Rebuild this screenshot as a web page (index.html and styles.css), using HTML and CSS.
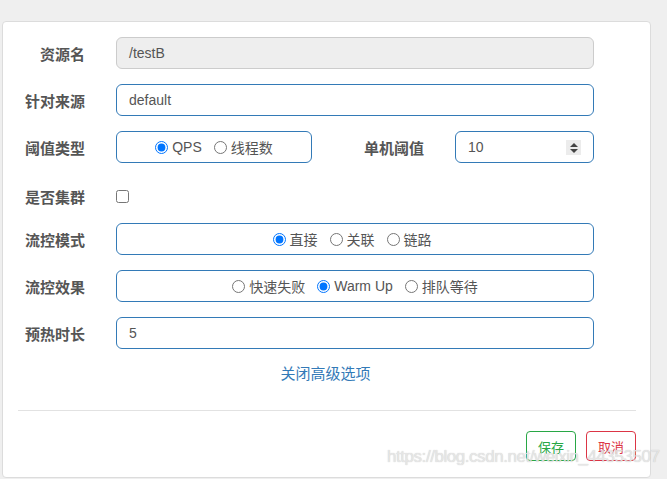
FILE: index.html
```
<!DOCTYPE html>
<html lang="zh-CN">
<head>
<meta charset="utf-8">
<title>流控规则</title>
<link rel="stylesheet" href="styles.css">
</head>
<body>
<div class="card">
  <form class="form">
    <div class="row">
      <label class="lbl">资源名</label>
      <div class="field disabled">/testB</div>
    </div>
    <div class="row">
      <label class="lbl">针对来源</label>
      <div class="field">default</div>
    </div>
    <div class="row">
      <label class="lbl">阈值类型</label>
      <div class="split">
        <div class="field radios type-box">
          <label class="opt"><input type="radio" name="grade" checked>QPS</label>
          <label class="opt"><input type="radio" name="grade">线程数</label>
        </div>
        <label class="lbl sub">单机阈值</label>
        <div class="field num">10<span class="spin"><i class="up"></i><i class="down"></i></span></div>
      </div>
    </div>
    <div class="row check-row">
      <label class="lbl">是否集群</label>
      <div><input type="checkbox" class="chk"></div>
    </div>
    <div class="row">
      <label class="lbl">流控模式</label>
      <div class="field radios shift">
        <label class="opt"><input type="radio" name="mode" checked>直接</label>
        <label class="opt"><input type="radio" name="mode">关联</label>
        <label class="opt"><input type="radio" name="mode">链路</label>
      </div>
    </div>
    <div class="row">
      <label class="lbl">流控效果</label>
      <div class="field radios">
        <label class="opt"><input type="radio" name="effect">快速失败</label>
        <label class="opt"><input type="radio" name="effect" checked>Warm Up</label>
        <label class="opt"><input type="radio" name="effect">排队等待</label>
      </div>
    </div>
    <div class="row">
      <label class="lbl">预热时长</label>
      <div class="field">5</div>
    </div>
    <div class="adv"><a class="link">关闭高级选项</a></div>
  </form>
  <div class="divider"></div>
  <div class="footer">
    <button class="btn save" type="button">保存</button>
    <button class="btn cancel" type="button">取消</button>
  </div>
</div>
<div class="watermark">https://blog.csdn.net/weixin_44353507</div>
</body>
</html>
```
FILE: styles.css
```
* { box-sizing: border-box; }
body {
  margin: 0;
  background: #efefef;
  font-family: "Liberation Sans", Arial, "Noto Sans CJK SC", sans-serif;
  color: #555;
  position: relative;
  height: 479px;
  overflow: hidden;
}
.card {
  margin: 21px 0 0 2px;
  width: 649px;
  height: 457px;
  background: #fff;
  border: 1px solid #dcdcdc;
  border-radius: 4px;
}
.form { padding-top: 15px; }
.row {
  display: grid;
  grid-template-columns: 82px 478px;
  column-gap: 31px;
  align-items: center;
  height: 32px;
  margin-bottom: 15px;
}
.lbl {
  text-align: right;
  font-weight: bold;
  font-size: 15px;
  color: #555;
}
.field {
  height: 32px;
  border: 1px solid #337ab7;
  border-radius: 6px;
  padding: 0 12px;
  font-size: 14px;
  color: #555;
  display: flex;
  align-items: center;
  background: #fff;
}
.field.disabled {
  background: #eee;
  border-color: #ccc;
}
.split {
  display: flex;
  align-items: center;
}
.type-box { width: 196px; }
.lbl.sub {
  flex: 1;
  padding-right: 31px;
}
.num {
  width: 139px;
  position: relative;
}
.spin {
  position: absolute;
  right: 12px;
  top: 8px;
  width: 15px;
  height: 15px;
  background: #ececec;
  display: flex;
  flex-direction: column;
  align-items: center;
  justify-content: center;
  gap: 2px;
}
.spin i {
  width: 0;
  height: 0;
  border-left: 4px solid transparent;
  border-right: 4px solid transparent;
}
.spin .up { border-bottom: 4px solid #444; }
.spin .down { border-top: 4px solid #444; }
.radios {
  justify-content: center;
  gap: 12px;
}
.radios.shift { padding-right: 18px; }
.opt {
  display: inline-flex;
  align-items: center;
  font-size: 14px;
  color: #555;
}
.opt input {
  margin: 0 4px 0 0;
  width: 13px;
  height: 13px;
}
.check-row {
  height: 33px;
  padding-top: 4px;
  margin-bottom: 12px;
}
.chk {
  margin: 0;
  width: 13px;
  height: 13px;
  display: block;
}
.adv {
  text-align: center;
  margin-top: 4px;
  line-height: 20px;
  padding-right: 2px;
}
.link {
  color: #337ab7;
  font-size: 15px;
  text-decoration: none;
}
.divider {
  height: 1px;
  background: #e2e2e2;
  margin: 26px 14px 0 15px;
}
.footer {
  display: flex;
  justify-content: flex-end;
  gap: 10px;
  padding: 20px 14px 0 0;
}
.btn {
  width: 50px;
  height: 30px;
  background: #fff;
  border-radius: 4px;
  font-size: 13px;
  font-family: "Noto Sans CJK SC", sans-serif;
  padding: 0;
  cursor: pointer;
}
.save { border: 1px solid #28a745; color: #28a745; }
.cancel { border: 1px solid #dc3545; color: #dc3545; }
.watermark {
  position: absolute;
  left: 387px;
  top: 447px;
  font-size: 17px;
  letter-spacing: -0.45px;
  color: rgba(235, 235, 235, 0.85);
  text-shadow: 0 0 1px rgba(120, 120, 120, 0.45);
  white-space: nowrap;
  pointer-events: none;
}
```
